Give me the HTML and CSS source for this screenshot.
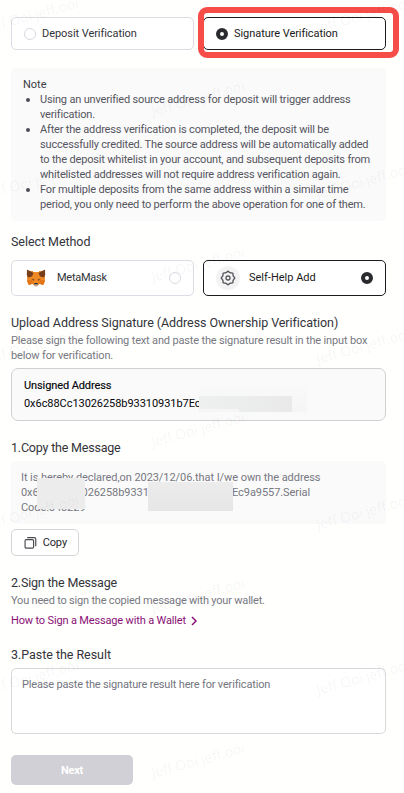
FILE: index.html
```
<!DOCTYPE html>
<html lang="en">
<head>
    <meta charset="UTF-8">
    <meta name="viewport" content="width=device-width, initial-scale=1.0">
    <title>Address Verification</title>
    <link rel="stylesheet" href="styles.css">
</head>
<body>
    <main class="page">
        <div class="tabs">
            <label class="tab"><span class="radio"></span><span class="tab-text">Deposit Verification</span></label>
            <label class="tab active"><span class="radio checked"></span><span class="tab-text">Signature Verification</span></label>
            <span class="highlight"></span>
        </div>

        <section class="note">
            <div class="note-title">Note</div>
            <ul>
                <li>Using an unverified source address for deposit will trigger address<br>verification.</li>
                <li>After the address verification is completed, the deposit will be<br>successfully credited. The source address will be automatically added<br>to the deposit whitelist in your account, and subsequent deposits from<br>whitelisted addresses will not require address verification again.</li>
                <li>For multiple deposits from the same address within a similar time<br>period, you only need to perform the above operation for one of them.</li>
            </ul>
        </section>

        <!-- Select method -->
        <h2 class="select-title">Select Method</h2>
        <div class="methods">
            <label class="method">
                <svg class="fox" viewBox="0 0 20 18">
                    <path fill="#f08a24" d="M1.500 2h17l.5 10-1.500 4-4-1-2 2h-3l-2-2-4 1L1 12z"/>
                    <path fill="#fffffe" d="M7 0h6v3H7z"/>
                    <path fill="#763e1a" d="M1 .5L7.500 4 6 7.500 2 8.500.8 6zM19 .5L12.500 4 14 7.500l4 1L19.200 6z"/>
                    <path fill="#e2761b" d="M1 11.500l5-1 1 4-4 1.500zM19 11.500l-5-1-1 4 4 1.500z"/>
                    <path fill="#5a3a20" d="M5.500 9.500l2.800 1-.3 1.500zM14.500 9.500l-2.800 1L12 12z"/>
                    <path fill="#233447" d="M8.300 14h3.400l.3 1.500H8z"/>
                    <path fill="#c0ad9e" d="M7.500 15.500h5l-1.500 2H9z"/>
                </svg>
                <span class="method-name metamask">MetaMask</span>
                <span class="radio"></span>
            </label>
            <label class="method active">
                <span class="gear">
                    <svg viewBox="0 0 16 16">
                        <g fill="#55565c">
                            <rect x="2.300" y="2.300" width="11.400" height="11.400" rx="1.800"/>
                            <rect x="2.300" y="2.300" width="11.400" height="11.400" rx="1.800" transform="rotate(45 8 8)"/>
                        </g>
                        <g fill="#f3f3f3">
                            <rect x="3.600" y="3.600" width="8.800" height="8.800" rx="1"/>
                            <rect x="3.600" y="3.600" width="8.800" height="8.800" rx="1" transform="rotate(45 8 8)"/>
                        </g>
                        <circle cx="8" cy="8" r="2" fill="none" stroke="#55565c" stroke-width="1.300"/>
                    </svg>
                </span>
                <span class="method-name">Self-Help Add</span>
                <span class="radio checked"></span>
            </label>
        </div>

        <!-- Address signature -->
        <h2 class="upload-title">Upload Address Signature (Address Ownership Verification)</h2>
        <p class="desc">Please sign the following text and paste the signature result in the input box<br>below for verification.</p>
        <div class="address-box">
            <div class="address-label">Unsigned Address</div>
            <div class="address">0x6c88Cc13026258b93310931b7Ec</div>
            <span class="mask mask-glow"></span>
            <span class="mask mask-address"></span>
        </div>

        <h2 class="step1">1.Copy the Message</h2>
        <div class="message">
            It is hereby declared,on 2023/12/06.that I/we own the address<br>
            <span class="hash">0x6c88Cc13026258b9331</span><span>Ec9a9557.Serial</span><br>
            Code:548229
            <span class="mask mask-left"></span>
            <span class="mask mask-right"></span>
        </div>
        <button class="copy-btn">
            <svg viewBox="0 0 14 14" fill="none" stroke="#4b4b50" stroke-width="1.300">
                <rect x="1.200" y="3.200" width="9.400" height="9.400" rx="1.300"/>
                <path d="M3.500 1.100h8a1.500 1.500 0 0 1 1.500 1.500v8"/>
            </svg>
            <span>Copy</span>
        </button>

        <h2 class="step2">2.Sign the Message</h2>
        <p class="desc desc-sign">You need to sign the copied message with your wallet.</p>
        <a class="guide">How to Sign a Message with a Wallet
            <svg viewBox="0 0 6 10" fill="none" stroke="#8a1075" stroke-width="1.500"><path d="M1 1l4 4-4 4"/></svg>
        </a>

        <h2 class="step3">3.Paste the Result</h2>
        <textarea class="result" placeholder="Please paste the signature result here for verification"></textarea>
        <button class="next-btn">Next</button>
    </main>

    <!-- Watermark -->
    <svg class="watermark" width="404" height="793">
        <defs>
            <text id="mark" transform="rotate(-15.500)">Jeff Ooi jeff.ooi</text>
        </defs>
        <use href="#mark" transform="translate(-13 33)"/>
        <use href="#mark" transform="translate(318 33)"/>
        <use href="#mark" transform="translate(153 116)"/>
        <use href="#mark" transform="translate(-13 199)"/>
        <use href="#mark" transform="translate(318 199)"/>
        <use href="#mark" transform="translate(153 282)"/>
        <use href="#mark" transform="translate(-13 364)"/>
        <use href="#mark" transform="translate(318 364)"/>
        <use href="#mark" transform="translate(153 447)"/>
        <use href="#mark" transform="translate(-13 530)"/>
        <use href="#mark" transform="translate(318 530)"/>
        <use href="#mark" transform="translate(153 613)"/>
        <use href="#mark" transform="translate(-13 695)"/>
        <use href="#mark" transform="translate(318 695)"/>
        <use href="#mark" transform="translate(153 778)"/>
    </svg>
</body>
</html>
```
FILE: styles.css
```
* {
    box-sizing: border-box;
}

body {
    margin: 0;
    background: #fffffe;
    color: #33343a;
    font-family: Roboto, "Liberation Sans", sans-serif;
    font-size: 11px;
    line-height: 15px;
    overflow: hidden;
}

.page {
    width: 397px;
    height: 793px;
    padding: 17px 11px 0;
    white-space: nowrap;
}

h2 {
    margin: 0;
    font-size: 12.5px;
    line-height: 16px;
    font-weight: 400;
    letter-spacing: -0.06px;
}

p {
    margin: 0;
}

/* Tabs */
.tabs {
    display: flex;
    gap: 9px;
    position: relative;
}

.tab,
.method {
    display: flex;
    align-items: center;
    width: 183px;
    height: 33px;
    border: 1px solid #dcdce4;
    border-radius: 5px;
    background: #fff;
}

.tab {
    padding-left: 12px;
    gap: 6px;
    letter-spacing: -0.06px;
}

.tab.active,
.method.active {
    border-color: #1b1b20;
    color: #1b1b20;
}

.radio {
    width: 12px;
    height: 12px;
    border: 1px solid #d9d9e2;
    border-radius: 50%;
    background: #fff;
    flex-shrink: 0;
}

.radio.checked {
    border: 4px solid #2a2b2e;
}

.highlight {
    position: absolute;
    left: 187px;
    top: -10px;
    width: 201px;
    height: 51px;
    border: 6px solid #f64d48;
    border-radius: 9px;
}

/* Note */
.note {
    height: 153px;
    margin-top: 18px;
    padding: 9px 12px;
    border-radius: 5px;
    background: #fafafa;
    color: #54555e;
    letter-spacing: -0.18px;
}

.note-title {
    color: #3c3d44;
    letter-spacing: 0;
}

.note ul {
    margin: 0;
    padding-left: 17px;
    list-style: none;
}

.note li::before {
    content: "";
    float: left;
    width: 4px;
    height: 4px;
    margin: 6px 0 0 -14px;
    border-radius: 50%;
    background: #4d4e57;
}

/* Methods */
.select-title {
    margin-top: 13px;
}

.methods {
    display: flex;
    gap: 9px;
    margin-top: 10px;
}

.method {
    height: 36px;
    padding: 0 12px;
}

.method .radio {
    margin-left: auto;
}

.fox {
    width: 20px;
    height: 18px;
    margin: 0 11px 0 2px;
}

.metamask {
    letter-spacing: -0.25px;
}

.gear {
    display: flex;
    width: 24px;
    height: 24px;
    padding: 4px;
    margin-right: 9px;
    border-radius: 50%;
    background: #f3f3f3;
}

.method-name {
    position: relative;
    top: -1px;
}

/* Upload */
.upload-title {
    margin-top: 19px;
}

.desc {
    margin-top: 2px;
    color: #777881;
    letter-spacing: -0.16px;
}

.address-box {
    position: relative;
    height: 53px;
    margin-top: 5px;
    padding: 9px 12px;
    border: 1px solid #d0d0d3;
    border-radius: 7px;
    background: #fafafa;
    color: #050508;
}

.address-label {
    -webkit-text-stroke: 0.15px #050508;
    letter-spacing: -0.1px;
}

.address {
    margin-top: 3px;
    letter-spacing: -0.06px;
}

.mask {
    position: absolute;
}

.mask-glow {
    left: 187px;
    top: 12px;
    width: 108px;
    height: 31px;
    background: linear-gradient(#fafafa, #f5f5f5);
}

.mask-address {
    left: 187px;
    top: 27px;
    width: 93px;
    height: 16px;
    background: linear-gradient(90deg, #eef0f0, #e9e9e9);
    clip-path: polygon(0 0, 100% 0, 100% 100%, 40px 100%, 40px 13px, 0 13px);
}

/* Steps */
.step1 {
    margin-top: 19px;
    letter-spacing: -0.2px;
}

.message {
    position: relative;
    height: 63px;
    margin-top: 5px;
    padding: 9px 10px;
    border-radius: 5px;
    background: #fafafa;
    color: #777881;
    letter-spacing: -0.07px;
}

.hash {
    display: inline-block;
    width: 211px;
}

.mask-left {
    left: 26px;
    top: 17px;
    width: 48px;
    height: 31px;
    background: #ececed;
}

.mask-right {
    left: 137px;
    top: 21px;
    width: 85px;
    height: 29px;
    background: linear-gradient(#ececec, #e6e6e6);
}

.copy-btn {
    display: flex;
    align-items: center;
    gap: 6px;
    width: 68px;
    height: 27px;
    margin-top: 5px;
    padding: 0 11px 0 12px;
    border: 1px solid #d5d5d8;
    border-radius: 5px;
    background: #fff;
    color: #26272b;
    font: 11px Roboto, sans-serif;
    letter-spacing: -0.1px;
}

.copy-btn svg {
    width: 14px;
    height: 14px;
}

.step2 {
    margin-top: 19px;
    letter-spacing: -0.19px;
}

.desc-sign {
    letter-spacing: -0.2px;
}

.guide {
    display: flex;
    align-items: center;
    gap: 5px;
    margin-top: 5px;
    color: #8a1075;
    letter-spacing: -0.155px;
}

.guide svg {
    width: 6px;
    height: 10px;
}

.step3 {
    margin-top: 19px;
    letter-spacing: -0.04px;
}

.result {
    display: block;
    width: 375px;
    height: 66px;
    margin-top: 5px;
    padding: 8px 10px;
    border: 1px solid #d8d8da;
    border-radius: 5px;
    background: #fff;
    font: 11px/15px Roboto, sans-serif;
    letter-spacing: -0.17px;
    resize: none;
}

.result::placeholder {
    color: #74757e;
}

.next-btn {
    display: block;
    width: 122px;
    height: 30px;
    margin-top: 21px;
    border: none;
    border-radius: 5px;
    background: #d1d0d6;
    color: #fff;
    font: 700 11px Roboto, sans-serif;
    letter-spacing: -0.2px;
}

.watermark {
    position: absolute;
    left: 0;
    top: 0;
    pointer-events: none;
    font: 14px "Open Sans", sans-serif;
    fill: rgba(0, 0, 0, 0.05);
}
```
